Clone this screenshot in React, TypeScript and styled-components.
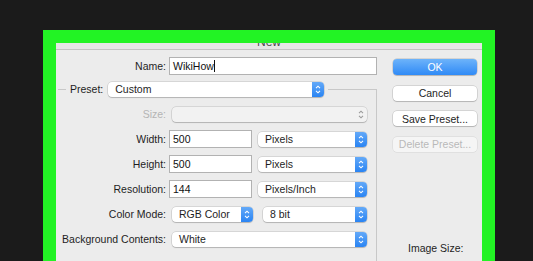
import React from 'react';
import styled, { createGlobalStyle } from 'styled-components';

const GlobalStyle = createGlobalStyle`
  html, body { margin: 0; padding: 0; background: #1b1b1b; }
  body { font-family: "Liberation Sans", Arial, sans-serif; overflow: hidden; }
`;

const Chevrons = ({ color }: { color: string }) => (
  <svg width="6" height="9" viewBox="0 0 6 9">
    <path d="M1 3.2 L3 1.2 L5 3.2 M1 5.8 L3 7.8 L5 5.8" fill="none" stroke={color} strokeWidth="1.1" />
  </svg>
);

const Select = ({ value, disabled }: { value?: string; disabled?: boolean }) => (
  <SelectBox $disabled={disabled}>
    <SelectText>{value}</SelectText>
    <Stepper $disabled={disabled}>
      <Chevrons color={disabled ? '#9a9a9a' : '#ffffff'} />
    </Stepper>
  </SelectBox>
);

export default function App() {
  return (
    <>
      <GlobalStyle />
      <Stage>
        <Frame>
          <TitleBar>
            <Title>New</Title>
          </TitleBar>
          <Body>
            <LeftCol>
              <NameRow>
                <Label>Name:</Label>
                <TextField>
                  WikiHow<Caret />
                </TextField>
              </NameRow>

              <Group>
                <Legend>
                  <Label>Preset:</Label>
                  <PresetSlot>
                    <Select value="Custom" />
                  </PresetSlot>
                </Legend>
                <Rows>
                  <Label $disabled>Size:</Label>
                  <Controls $inset>
                    <Select disabled />
                  </Controls>

                  <Label>Width:</Label>
                  <Controls $gap={6}>
                    <NumberField>500</NumberField>
                    <Select value="Pixels" />
                  </Controls>

                  <Label>Height:</Label>
                  <Controls $gap={6}>
                    <NumberField>500</NumberField>
                    <Select value="Pixels" />
                  </Controls>

                  <Label>Resolution:</Label>
                  <Controls $gap={6}>
                    <NumberField>144</NumberField>
                    <Select value="Pixels/Inch" />
                  </Controls>

                  <Label>Color Mode:</Label>
                  <Controls $inset $gap={10}>
                    <ModeSlot>
                      <Select value="RGB Color" />
                    </ModeSlot>
                    <Select value="8 bit" />
                  </Controls>

                  <Label>Background Contents:</Label>
                  <Controls $inset>
                    <Select value="White" />
                  </Controls>
                </Rows>
              </Group>
            </LeftCol>

            <RightCol>
              <Button $primary>OK</Button>
              <Button>Cancel</Button>
              <Button>Save Preset...</Button>
              <Button $disabled>Delete Preset...</Button>
              <ImageSize>Image Size:</ImageSize>
            </RightCol>
          </Body>
        </Frame>
      </Stage>
    </>
  );
}

const Stage = styled.div`
  width: 533px;
  height: 261px;
  overflow: hidden;
  padding: 30px 0 0 43px;
  box-sizing: border-box;
`;

const Frame = styled.div`
  width: 426px;
  height: 260px;
  border: 13px solid #22f324;
  border-bottom: none;
  background: #ececec;
`;

const TitleBar = styled.div`
  height: 6px;
  overflow: hidden;
  text-align: center;
  background: #e6e6e6;
  border-bottom: 1px solid #c3c3c3;
`;

const Title = styled.div`
  font-size: 12px;
  line-height: 12px;
  margin-top: -7px;
  color: #4a4a4a;
`;

const Body = styled.div`
  display: flex;
  gap: 16px;
  padding: 7px 5px 0 0;
`;

const LeftCol = styled.div`
  width: 321px;
  display: flex;
  flex-direction: column;
`;

const NameRow = styled.div`
  display: grid;
  grid-template-columns: 110px 208px;
  column-gap: 3px;
  align-items: center;
  height: 18px;
`;

const Label = styled.div<{ $disabled?: boolean }>`
  font-size: 10.5px;
  line-height: 12px;
  text-align: right;
  white-space: nowrap;
  color: ${p => (p.$disabled ? '#b4b4b4' : '#1e1e1e')};
`;

const TextField = styled.div`
  height: 18px;
  box-sizing: border-box;
  border: 1px solid #b2b2b2;
  background: #fff;
  padding: 0 3px;
  font-size: 10.5px;
  line-height: 16px;
  color: #111;
  display: flex;
  align-items: center;
`;

const Caret = styled.span`
  width: 1px;
  height: 12px;
  background: #111;
`;

const NumberField = styled(TextField)`
  width: 83px;
  flex: none;
`;

const Group = styled.fieldset`
  margin: 6px 0 0 2px;
  padding: 0 10px 0 0;
  min-width: 0;
  height: 200px;
  border: 1px solid #c8c8c8;
  border-left: none;
  border-bottom: none;
`;

const Legend = styled.legend`
  margin-left: 8px;
  padding: 0 4px;
  height: 16px;
  display: flex;
  align-items: center;
  gap: 5px;
`;

const PresetSlot = styled.div`
  width: 216px;
  display: flex;
`;

const Rows = styled.div`
  display: grid;
  grid-template-columns: 108px 198px;
  grid-auto-rows: 18px;
  column-gap: 3px;
  row-gap: 7px;
  align-items: center;
  padding-top: 8px;
`;

const Controls = styled.div<{ $inset?: boolean; $gap?: number }>`
  display: flex;
  align-items: center;
  height: 18px;
  gap: ${p => p.$gap ?? 0}px;
  padding-left: ${p => (p.$inset ? 3 : 0)}px;
`;

const ModeSlot = styled.div`
  width: 81px;
  flex: none;
  display: flex;
`;

const SelectBox = styled.div<{ $disabled?: boolean }>`
  flex: 1;
  height: 15px;
  display: flex;
  align-items: center;
  border-radius: 4px;
  background: ${p => (p.$disabled ? '#f2f2f2' : '#ffffff')};
  box-shadow: 0 0 0 0.5px rgba(0, 0, 0, 0.18), 0 1px 1px rgba(0, 0, 0, 0.16);
`;

const SelectText = styled.div`
  flex: 1;
  padding-left: 7px;
  font-size: 10.5px;
  line-height: 12px;
  color: #1e1e1e;
  white-space: nowrap;
  overflow: hidden;
`;

const Stepper = styled.div<{ $disabled?: boolean }>`
  width: 12px;
  height: 100%;
  display: flex;
  align-items: center;
  justify-content: center;
  border-radius: 0 4px 4px 0;
  background: ${p => (p.$disabled ? 'transparent' : 'linear-gradient(#63a9f8, #2a84f3)')};
`;

const RightCol = styled.div`
  width: 84px;
  display: flex;
  flex-direction: column;
  gap: 10.5px;
  padding-top: 2px;
`;

const Button = styled.div<{ $primary?: boolean; $disabled?: boolean }>`
  height: ${p => (p.$primary ? 16 : 15)}px;
  border-radius: 4px;
  display: flex;
  align-items: center;
  justify-content: center;
  font-size: 10.5px;
  color: ${p => (p.$primary ? '#ffffff' : p.$disabled ? '#b9b9b9' : '#1e1e1e')};
  background: ${p =>
    p.$primary ? 'linear-gradient(#6db3fa, #2f8af6)' : p.$disabled ? '#f5f5f5' : '#ffffff'};
  box-shadow: ${p =>
    p.$disabled
      ? '0 0 0 0.5px rgba(0, 0, 0, 0.1)'
      : '0 0 0 0.5px rgba(0, 0, 0, 0.2), 0 1px 1px rgba(0, 0, 0, 0.15)'};
`;

const ImageSize = styled.div`
  margin-top: 80px;
  padding-left: 15px;
  font-size: 10.5px;
  line-height: 12px;
  color: #1e1e1e;
`;
